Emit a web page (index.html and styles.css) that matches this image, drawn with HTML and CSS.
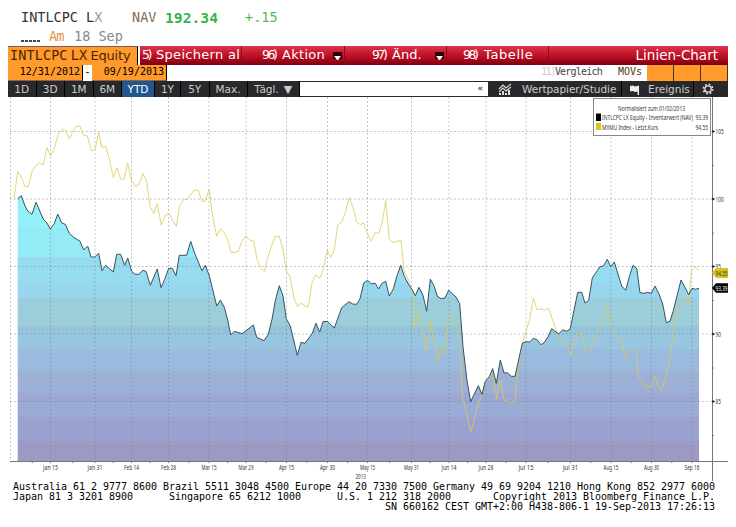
FILE: index.html
```
<!DOCTYPE html>
<html lang="de">
<head>
    <meta charset="UTF-8">
    <meta name="viewport" content="width=device-width, initial-scale=1.0">
    <title>INTLCPC LX Equity</title>
    <link rel="stylesheet" href="styles.css">
</head>
<body>
    <header class="quote">
        <div class="quote-line"><span class="ticker">INTLCPC L<i>X</i></span><span class="nav-label">NAV</span><b class="price">192.34</b><span class="change">+.15</span></div>
        <div class="quote-date"><span class="dots"></span><span class="am">Am</span><span>18 Sep</span></div>
    </header>
    <div class="menu">
        <div class="security">INTLCPC LX <span>Equity</span></div>
        <div class="menu-item save"><span class="num">5)</span>Speichern al</div>
        <div class="menu-item action"><span class="num">96)</span>Aktion<span class="drop"></span></div>
        <div class="menu-item edit"><span class="num">97)</span>Änd.<span class="drop"></span></div>
        <div class="menu-item table"><span class="num">98)</span>Tabelle</div>
        <div class="menu-title">Linien-Chart</div>
    </div>
    <div class="range">
        <div class="date">12/31/2012</div>
        <span class="dash">-</span>
        <div class="date to">09/19/2013</div>
        <div class="compare"><span>11)</span>Vergleich</div>
        <div class="movs">MOVs</div>
        <div class="box"></div>
        <div class="box"></div>
        <div class="box"></div>
    </div>
    <div class="toolbar">
        <div class="tab w28">1D</div>
        <div class="tab w28">3D</div>
        <div class="tab w28">1M</div>
        <div class="tab w28">6M</div>
        <div class="tab w33 active">YTD</div>
        <div class="tab w26">1Y</div>
        <div class="tab w28">5Y</div>
        <div class="tab w38">Max.</div>
        <div class="tab w52">Tägl. <span class="arrow">▼</span></div>
        <div class="field">«</div>
        <div class="tab study">
            <svg width="14" height="12" viewBox="0 0 14 12"><path d="M1 6L5 2L8 5L13 1M1 9L5 5L8 8L13 4" fill="none" stroke="#ddd" stroke-width="1.1"/><path d="M2 12V10M5 12V8M8 12V10M11 12V7" stroke="#ddd" stroke-width="2"/></svg>
            <span>Wertpapier/Studie</span>
        </div>
        <div class="tab event">
            <svg width="9" height="11" viewBox="0 0 9 11"><path d="M0 2L3 1.5L5 2.5L9 1.5V11H7.6V7.5L5 8L3 7L0 7.5Z" fill="#eee"/></svg>
            <span>Ereignis</span>
        </div>
        <div class="tab gear">
            <svg width="12" height="12" viewBox="0 0 12 12"><circle cx="6" cy="6" r="4.6" fill="none" stroke="#ddd" stroke-width="1.8" stroke-dasharray="1.8 1.81"/><circle cx="6" cy="6" r="3.2" fill="none" stroke="#ddd" stroke-width="1.3"/></svg>
        </div>
    </div>
    <svg class="chart" viewBox="0 97 736 385" width="736" height="385">
        <defs>
            <clipPath id="area"><polygon id="area-shape"/></clipPath>
        </defs>
        <g id="bands" clip-path="url(#area)"></g>
        <g id="grid"></g>
        <polyline id="index-line" class="index-line"/>
        <polyline id="nav-line" class="nav-line"/>
        <g id="axes"></g>
        <g id="flags">
            <path d="M712 272.8L716 268H728V278H716Z" fill="#d9c31c"/>
            <text class="label" x="715.5" y="275.8" textLength="12" lengthAdjust="spacingAndGlyphs">94.55</text>
            <path d="M712 288L716 283.2H728V292.8H716Z" fill="#000"/>
            <text class="label white" x="715.5" y="291" textLength="12" lengthAdjust="spacingAndGlyphs">93.39</text>
        </g>
        <g id="legend">
            <rect x="593.5" y="98.5" width="117" height="37" fill="#fff" stroke="#888"/>
            <text class="label" x="618" y="111" textLength="67" lengthAdjust="spacingAndGlyphs">Normalisiert zum 01/02/2013</text>
            <rect x="596" y="113.5" width="5" height="7.5" fill="#000"/>
            <text class="label" x="602" y="120.2" textLength="91" lengthAdjust="spacingAndGlyphs">INTLCPC LX Equity - Inventarwert (NAV)</text>
            <text class="label" x="695.5" y="120.2" textLength="12.5" lengthAdjust="spacingAndGlyphs">93.39</text>
            <rect x="596" y="123" width="5" height="7" fill="#d9c31c"/>
            <text class="label" x="602" y="129.8" textLength="56" lengthAdjust="spacingAndGlyphs">MXMU Index - Letzt.Kurs</text>
            <text class="label" x="695.5" y="129.8" textLength="12.5" lengthAdjust="spacingAndGlyphs">94.55</text>
        </g>
    </svg>
    <pre class="contact">Australia 61 2 9777 8600 Brazil 5511 3048 4500 Europe 44 20 7330 7500 Germany 49 69 9204 1210 Hong Kong 852 2977 6000
Japan 81 3 3201 8900      Singapore 65 6212 1000      U.S. 1 212 318 2000       Copyright 2013 Bloomberg Finance L.P.
                                                              SN 660162 CEST GMT+2:00 H438-806-1 19-Sep-2013 17:26:13</pre>
    <script src="chart.js"></script>
</body>
</html>
```
FILE: styles.css
```
* {
    box-sizing: border-box;
}
body {
    margin: 0;
    width: 736px;
    height: 527px;
    overflow: hidden;
    background: #fff;
    font-family: "DejaVu Sans", sans-serif;
    color: #000;
}
.quote {
    height: 46px;
    padding: 8px 0 0 21px;
    font-family: "DejaVu Sans Mono", monospace;
    font-size: 13.5px;
}
.quote-line,
.quote-date {
    display: flex;
    height: 19px;
    line-height: 19px;
    white-space: pre;
}
.quote-line {
    color: #333;
}
.quote-line i {
    font-style: normal;
    color: #999;
}
.ticker {
    width: 111px;
}
.nav-label {
    width: 33px;
    color: #846c50;
}
.price {
    width: 80px;
    font-size: 14.7px;
    color: #36b548;
}
.change {
    color: #55b85c;
}
.quote-date {
    color: #888;
}
.dots {
    width: 19px;
    height: 2px;
    margin: 13px 9px 0 0;
    background: repeating-linear-gradient(90deg, #444 0 3px, #fff 3px 4px);
}
.am {
    width: 25px;
    letter-spacing: -1px;
    color: #e39245;
}
.menu {
    display: flex;
    width: 720px;
    height: 19px;
    margin-left: 8px;
    font-size: 13px;
    line-height: 18px;
    white-space: nowrap;
    color: #fff;
    background: linear-gradient(#d9394a 0, #c81b31 35%, #b00a20 65%, #7c0011 100%);
}
.security {
    width: 130px;
    padding-left: 2px;
    border-top: 1px solid #855;
    border-right: 1px solid #000;
    background: #ff9a2b;
    color: #4a2604;
    font-family: "DejaVu Sans Mono", monospace;
    font-size: 13.5px;
    line-height: 17px;
    word-spacing: -5px;
    letter-spacing: 0.1px;
}
.security span {
    font-family: "DejaVu Sans", sans-serif;
    font-size: 13px;
    letter-spacing: -0.2px;
}
.menu-item {
    display: flex;
    border-right: 1px solid #8c0a1c;
    overflow: hidden;
    letter-spacing: 0.3px;
}
.num {
    flex: none;
    letter-spacing: -2.5px;
    font-size: 12.5px;
}
.save {
    width: 104px;
    border-left: 2px solid #fff;
}
.save .num {
    width: 15px;
    padding-left: 2px;
    margin-right: 1px;
}
.action {
    width: 103px;
    padding-left: 20px;
}
.action .num,
.edit .num {
    width: 20px;
}
.edit {
    width: 102px;
    padding-left: 27px;
    letter-spacing: 0;
}
.table {
    width: 102px;
    padding-left: 16px;
    letter-spacing: 0.6px;
}
.table .num {
    width: 21px;
}
.drop {
    width: 9px;
    height: 7px;
    margin: 6px 2px 0 auto;
    background: #2a0005;
}
.drop::after {
    content: "";
    display: block;
    margin: 2px 1px 0;
    border: solid transparent;
    border-width: 4px 3.5px 0;
    border-top-color: #fff;
    transform: translateY(2px);
}
.menu-title {
    flex: 1;
    padding-right: 10px;
    text-align: right;
    font-size: 13.5px;
}
.range {
    display: flex;
    width: 720px;
    height: 16px;
    margin-left: 8px;
    font-family: "DejaVu Sans Mono", monospace;
    font-size: 10px;
    line-height: 14px;
}
.date {
    width: 75px;
    padding-right: 2px;
    border-right: 1px solid #000;
    border-bottom: 1px solid #865;
    background: #ff9a2b;
    text-align: right;
}
.dash {
    width: 9px;
    text-align: center;
}
.compare {
    width: 117px;
    margin-left: auto;
    padding-left: 40px;
    letter-spacing: -0.8px;
    color: #444;
    white-space: nowrap;
}
.compare span {
    letter-spacing: -1.4px;
    color: #ccc;
}
.movs {
    width: 29px;
    color: #553410;
}
.box {
    width: 27px;
    border-right: 1px solid #432;
    background: #ff9a2b;
}
.toolbar {
    display: flex;
    width: 720px;
    height: 16px;
    margin-left: 8px;
    background: #29292b;
    color: #ccc;
    font-size: 10.5px;
    line-height: 15px;
    white-space: nowrap;
}
.tab {
    flex: none;
    display: flex;
    align-items: center;
    justify-content: center;
    border-right: 1px solid #000;
}
.w26 { width: 26px; }
.w28 { width: 28.5px; }
.w33 { width: 33px; }
.w38 { width: 38px; }
.w52 { width: 52.5px; }
.active {
    background: #21578c;
    color: #fff;
}
.arrow {
    margin-left: 5px;
    font-size: 11px;
}
.field {
    flex: 1;
    margin: 1px 0;
    padding-right: 5px;
    background: #fff;
    color: #000;
    text-align: right;
    font-size: 9px;
    line-height: 13px;
}
.study {
    width: 134px;
    justify-content: flex-start;
    padding-left: 10px;
    gap: 10px;
    letter-spacing: -0.05px;
}
.event {
    width: 72px;
    justify-content: flex-start;
    padding-left: 8px;
    gap: 9px;
}
.gear {
    width: 34px;
    padding-right: 7px;
    border: none;
}
.chart {
    display: block;
}
.label {
    font-family: "Noto Sans", sans-serif;
    font-size: 6.8px;
    fill: #333;
}
.white {
    fill: #fff;
}
.grid-line {
    stroke: #777f90;
    stroke-opacity: 0.6;
    stroke-dasharray: 1.5 2.5;
}
.axis {
    stroke: #777;
}
.nav-line {
    fill: none;
    stroke: #34535e;
    stroke-width: 1;
}
.index-line {
    fill: none;
    stroke: #dcca55;
    stroke-opacity: 0.8;
    stroke-width: 1;
}
.contact {
    margin: 0 0 0 13px;
    font-family: "DejaVu Sans Mono", monospace;
    font-size: 10px;
    letter-spacing: -0.02px;
    line-height: 10px;
}
```
FILE: chart.js
```
const nav = [
    [17.7,198.7],[21.3,195.7],[25,206],[28,211.3],[32,214.3],[36,202.3],[43.3,219.3],[47,223],[50.3,229],[54.3,223.7],
    [57.7,214],[61.7,223],[65.3,224.3],[69.3,233.3],[73.3,237],[80,241.3],[83.7,250],[87.7,246],[91,257],[94.7,257],
    [98.7,253.3],[102,270.7],[105.7,265.3],[113.3,272],[116.7,254.3],[120.7,254.3],[124.7,265.3],[127.7,258],[131.7,271.3],[135,274.3],
    [139,274.3],[142.7,270.3],[146,271.3],[150.3,285.3],[157.3,269],[161,287.7],[164.7,279.3],[168.7,268.3],[172.3,268.3],[176,275.7],
    [179.3,255.3],[186.7,255.3],[190.7,241.3],[194.7,253.3],[202,270.7],[205.3,265.3],[209.3,275.7],[216.7,306],[220.3,300],[224.3,307.3],
    [227.7,320],[230.7,335],[234.3,331.3],[242,333.7],[253.3,325],[256.7,337.3],[264,340.7],[268.3,334.3],[272,319.3],[275.3,300.7],
    [279.3,285.7],[283,296],[286.3,318.7],[290.3,326],[297.3,355.3],[301,342.3],[305,343.3],[312.3,333.3],[316,323.3],[319.7,332],
    [323,321.7],[327.3,321.3],[334.3,328],[341.7,307.7],[349,301.7],[352.7,304],[356.7,304.3],[360,298.7],[363.7,283],[367.5,280.3],
    [371.3,283.7],[375.3,283.3],[378.7,289],[382,283.3],[385.7,281.3],[389.3,296],[393.3,289],[397,275.7],[400.7,265.3],[404.3,276.3],
    [408.3,284],[411.7,289],[415.3,295.7],[419,287.3],[423,295.3],[426.7,311.3],[430.3,279.3],[434,285.7],[437.3,296.3],[441.3,298.7],
    [445,298],[448.7,290.3],[456,297],[459.7,303.7],[463,346.7],[467,380.7],[470.7,401.7],[474.3,394],[478.3,385.7],[482,394.3],
    [485.3,381.3],[489.3,376.7],[492.7,368.7],[496.3,383.3],[500.3,360],[504,373],[507.3,372.7],[511.3,376.3],[515,376.3],[518,362.7],
    [522.3,343.3],[526,341.7],[529.7,342],[533.3,338.3],[537,339.7],[541,344.7],[544.3,342.5],[548,336.7],[551.7,328.7],[558.7,334],
    [562.7,329.7],[566.7,331.3],[570.3,328.7],[574,310.3],[577.7,292.3],[581.7,292.3],[585,303],[588.7,300.3],[592.3,278],[599.7,267],
    [603.7,265.7],[607.3,259.3],[610.7,266.7],[614.3,262],[621.7,286],[625.7,290.3],[629.3,276.7],[633,265.3],[636.7,268.3],[640,292.7],
    [644,293.3],[647.7,292.3],[651.3,293.3],[655,286],[659,294],[662.7,304],[666.3,322.7],[670,321.3],[673.3,310.7],[681,280],
    [685,287.3],[688.7,294.7],[692,288.3],[695.3,289.3],[699,288.3]
];
const index = [
    [14,198.7],[17.7,171.7],[21.3,176.7],[25,186.7],[28.3,186.7],[32,171.7],[35.7,165.7],[39.3,163],[43.3,164.7],[47,147.7],
    [50.7,156],[54.3,148.7],[58,134.7],[62.3,129.3],[65.3,130],[69.3,138.7],[73,130.7],[77,126],[80,126.3],[83.7,135.3],
    [87.3,135.7],[91.3,150.7],[95,150],[98.7,132.7],[102,147.7],[105.7,146],[109.3,159.3],[113.3,177.3],[117,168],[120.7,179.3],
    [124.3,178.7],[127.7,163],[131.7,181],[135.7,186.7],[139,184.3],[143,173.7],[146.7,181.3],[150,206.7],[153.7,213.3],[157.3,203.3],
    [161.3,225.3],[165,215.7],[168.7,213],[176.3,226.7],[179.7,205.7],[183.3,200.3],[187.7,198.7],[194,190.3],[198.3,190.3],[202,201.7],
    [205.3,201],[209,189.3],[212.7,216.7],[216.7,236.3],[220.3,229],[224.3,232.7],[227.7,240],[231,252.3],[234.7,252.3],[238.3,251.3],
    [242,241],[246,236],[249.3,239.7],[253.7,241.3],[257,259],[260.7,267.7],[264.3,271.7],[267.7,258.3],[271.7,245.3],[275.3,236.3],
    [279.3,236.3],[283,249.7],[286.3,270.7],[290.3,277.3],[294,298.7],[297.7,306.7],[301,302.7],[305,306.3],[308.3,306.3],[312,282.7],
    [315.7,274.7],[319.7,278.3],[323,270.3],[327.3,250.7],[330.7,257],[334.3,250],[337.7,225],[341.7,222.3],[345.7,211],[349.3,197.7],
    [353.3,208],[356.7,222.3],[360.3,224.7],[363.5,222.7],[367.3,233.3],[371.3,241.3],[375,233],[379,233],[382.3,222],[385.7,200.7],
    [389.3,239.3],[393.3,242.7],[401,240.3],[404.3,272.3],[408.3,279.3],[411.7,291.3],[415,328.7],[419,311.3],[423,334],[426.7,350.7],
    [430,320],[433.7,340],[437.7,362.7],[441.3,346.7],[445,354],[448.3,318.3],[452.3,315.3],[456,323.7],[459.7,340],[462.3,396.7],
    [466.7,413.3],[470.7,431.7],[474.7,418.3],[478.3,403.3],[482,395],[485.7,381],[489.3,377.3],[493,373.3],[496.7,399.3],[500.3,380],
    [504,400],[507.7,401.7],[511.7,403.3],[515,401.7],[518.3,366.7],[522.7,341.7],[529.7,319.3],[533.3,298],[537,309.7],[541,309],
    [544.7,310.3],[548.5,308],[555.3,327.7],[559,336.7],[562.7,341.7],[567.3,344.7],[571,355.7],[574.3,341.7],[578,332.7],[581.7,333.3],
    [585.7,351.7],[590,352.7],[593.3,341.7],[597.3,331.7],[602.7,320],[607.3,305.3],[611,326.7],[615,335],[622,343.3],[625.7,358.3],
    [629.3,351.3],[636.7,350.7],[638,376],[643.3,384],[647.3,386.7],[651.3,386.7],[655,376],[659,388.3],[661.7,390],[666,376.7],
    [670.3,356.7],[674,326.7],[677.7,308.3],[681,298.3],[684.7,294.3],[688.3,303.3],[691.7,270],[695,266.7],[698.7,270.7]
];
// start of each shaded band and its colour
const bands = [
    [195,'#94f1fa'],[228,'#94ebf6'],[257,'#97dcee'],[282,'#98d5ef'],[298,'#9bcddb'],[326,'#94c3da'],[333,'#98c5df'],
    [349,'#9abbde'],[371,'#9cb1d5'],[393,'#9ca7d4'],[402,'#9aacd5'],[417,'#9aa3d0'],[441,'#9c99c5'],[461]
];
const dates = [
    [50.5,'Jan 15'],[95,'Jan 31'],[131.5,'Feb 14'],[168.5,'Feb 28'],[209,'Mar 15'],[246,'Mar 29'],[286.5,'Apr 15'],[327.5,'Apr 30'],
    [367.5,'May 15'],[411.5,'May 31'],[449,'Jun 14'],[486,'Jun 28'],[526,'Jul 15'],[570.5,'Jul 31'],[611,'Aug 15'],[651.5,'Aug 30'],[692,'Sep 16']
];
const levels = [[131.5,'105'],[199,'100'],[266.5,'95'],[334,'90'],[401.5,'85']];

const byId = (id) => document.getElementById(id);
const line = (x1, y1, x2, y2, cls) => `<line x1="${x1}" y1="${y1}" x2="${x2}" y2="${y2}" class="${cls}"/>`;
const label = (x, y, w, text) => `<text class="label" x="${x}" y="${y}" textLength="${w}" lengthAdjust="spacingAndGlyphs">${text}</text>`;

byId('nav-line').setAttribute('points', nav.join(' '));
byId('index-line').setAttribute('points', index.join(' '));
byId('area-shape').setAttribute('points', '17.7,461 ' + nav.join(' ') + ' 699,461');

let html = '';
for (let i = 0; i < bands.length - 1; i++) {
    html += `<rect x="17" y="${bands[i][0]}" width="683" height="${bands[i + 1][0] - bands[i][0]}" fill="${bands[i][1]}"/>`;
}
byId('bands').innerHTML = html;

html = line(10.5, 97, 10.5, 461, 'grid-line');
dates.forEach(([x]) => html += line(x, 97, x, 461, 'grid-line'));
levels.forEach(([y]) => html += line(10, y, 712, y, 'grid-line'));
byId('grid').innerHTML = html;

html = line(712.5, 97, 712.5, 481, 'axis') + line(10, 461.5, 728, 461.5, 'axis');
dates.forEach(([x, text], i) => {
    const prev = i ? dates[i - 1][0] : 14;
    html += line(x, 461, x, 463, 'axis') + line((x + prev) / 2, 461, (x + prev) / 2, 463, 'axis');
    html += label(x - 7.5, 469.5, 15, text);
});
html += label(355.5, 479, 10.5, '2013');
levels.forEach(([y, text]) => {
    html += `<path d="M712.5 ${y - 1.5}L715 ${y}L712.5 ${y + 1.5}Z"/>`;
    html += line(712, y + 34, 714, y + 34, 'axis');
    html += label(715.5, y + 2.5, text.length * 2.7, text);
});
byId('axes').innerHTML = html;
```
